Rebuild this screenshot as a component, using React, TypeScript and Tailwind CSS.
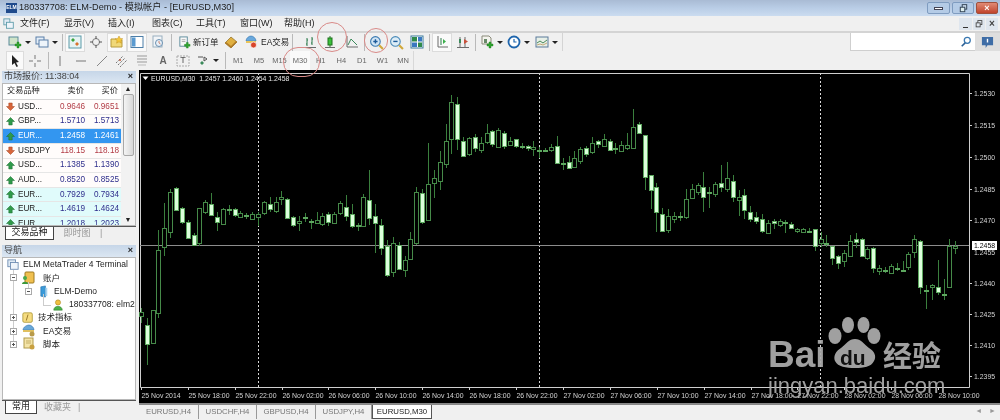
import type { ReactNode } from 'react';

const FONT = '[font-family:"Liberation_Sans","Noto_Sans_CJK_SC",sans-serif]';

// high, body top, body bottom, low, filled (pixel rows of the chart)
const CANDLES: number[][] = [
  [308, 312, 316, 323, 0], [318, 325, 344, 365, 1], [310, 310, 343, 344, 0], [230, 250, 313, 318, 0],
  [203, 228, 247, 256, 0], [189, 192, 232, 238, 0], [187, 188, 210, 210, 1], [207, 208, 222, 224, 1],
  [220, 222, 238, 239, 1], [233, 235, 245, 246, 1], [208, 208, 243, 246, 0], [200, 202, 212, 214, 0],
  [193, 204, 215, 216, 1], [212, 217, 222, 231, 1], [208, 209, 224, 225, 0], [205, 209, 210, 215, 1],
  [208, 209, 215, 217, 1], [211, 213, 217, 218, 0], [213, 215, 216, 219, 1], [212, 214, 219, 220, 0],
  [212, 214, 217, 226, 0], [201, 202, 213, 215, 0], [197, 204, 209, 212, 1], [197, 202, 211, 213, 0],
  [191, 197, 199, 205, 0], [198, 199, 218, 219, 1], [216, 217, 225, 227, 1], [216, 221, 223, 231, 0],
  [213, 217, 218, 222, 1], [219, 221, 222, 229, 1], [212, 220, 223, 224, 0], [213, 216, 224, 226, 0],
  [212, 214, 222, 226, 1], [212, 214, 223, 224, 0], [201, 203, 213, 215, 0], [195, 207, 216, 221, 1],
  [204, 214, 226, 228, 1], [223, 225, 226, 231, 1], [194, 197, 226, 227, 0], [170, 200, 218, 225, 1],
  [204, 216, 223, 253, 1], [219, 225, 248, 255, 1], [240, 246, 275, 277, 1], [237, 243, 272, 277, 0],
  [242, 245, 269, 270, 1], [256, 260, 270, 277, 0], [232, 239, 259, 260, 0], [187, 192, 243, 245, 0],
  [189, 193, 222, 224, 1], [143, 184, 220, 220, 0], [170, 178, 183, 198, 0], [151, 162, 181, 190, 0],
  [124, 141, 164, 168, 0], [95, 102, 139, 154, 0], [97, 104, 139, 150, 1], [137, 141, 156, 156, 1],
  [137, 138, 154, 156, 0], [134, 137, 148, 152, 1], [137, 143, 150, 153, 0], [124, 133, 142, 144, 0],
  [130, 131, 144, 147, 1], [128, 130, 147, 148, 0], [131, 133, 146, 149, 1], [137, 141, 145, 146, 0],
  [139, 139, 146, 148, 1], [143, 146, 147, 149, 1], [145, 146, 148, 151, 1], [141, 147, 149, 156, 0],
  [147, 150, 151, 158, 1], [148, 150, 151, 152, 1], [144, 147, 150, 152, 0], [136, 146, 163, 164, 1],
  [158, 163, 164, 170, 1], [156, 162, 168, 168, 1], [151, 158, 167, 168, 0], [147, 149, 161, 164, 0],
  [146, 148, 154, 157, 1], [137, 143, 152, 154, 0], [140, 141, 144, 148, 1], [134, 139, 146, 147, 0],
  [139, 141, 150, 151, 1], [143, 148, 149, 154, 1], [141, 145, 151, 152, 0], [133, 145, 148, 150, 0],
  [109, 127, 148, 148, 0], [122, 124, 133, 134, 1], [135, 135, 177, 190, 1], [175, 175, 190, 209, 1],
  [183, 187, 212, 232, 1], [208, 214, 231, 232, 1], [209, 216, 230, 233, 0], [212, 216, 219, 223, 0],
  [212, 216, 217, 221, 1], [189, 199, 217, 219, 0], [184, 189, 198, 199, 0], [183, 185, 192, 195, 0],
  [172, 187, 197, 212, 1], [187, 192, 193, 208, 1], [182, 184, 194, 197, 0], [165, 183, 187, 192, 1],
  [162, 178, 189, 192, 0], [175, 181, 197, 202, 1], [190, 197, 200, 216, 0], [189, 195, 210, 219, 1],
  [206, 212, 219, 222, 1], [212, 217, 221, 224, 1], [214, 219, 231, 233, 1], [220, 223, 233, 234, 0],
  [219, 221, 223, 229, 1], [219, 221, 225, 227, 0], [220, 222, 223, 233, 1], [222, 224, 228, 229, 1],
  [228, 229, 231, 233, 0], [228, 229, 232, 233, 0], [228, 231, 232, 232, 1], [229, 229, 246, 251, 1],
  [232, 239, 243, 247, 0], [235, 243, 244, 247, 1], [246, 246, 258, 265, 1], [255, 256, 263, 269, 1],
  [250, 253, 261, 267, 0], [235, 241, 256, 257, 0], [233, 239, 242, 248, 1], [238, 239, 256, 257, 1],
  [247, 249, 258, 260, 0], [247, 248, 268, 273, 1], [265, 268, 271, 275, 0], [267, 270, 271, 273, 1],
  [264, 266, 273, 274, 0], [263, 268, 269, 271, 1], [261, 270, 271, 272, 1], [252, 254, 267, 270, 0],
  [235, 239, 252, 258, 0], [240, 241, 287, 294, 1], [285, 290, 291, 309, 1], [284, 285, 287, 300, 0],
  [260, 287, 292, 295, 1], [279, 294, 295, 300, 1], [239, 246, 287, 288, 0], [241, 246, 248, 254, 0],
];

const PRICES: [string, number][] = [
  ['1.2530', 93], ['1.2515', 125], ['1.2500', 157], ['1.2485', 189], ['1.2470', 220],
  ['1.2440', 283], ['1.2425', 314], ['1.2410', 345], ['1.2395', 376],
];

const TIMES = [
  '25 Nov 2014', '25 Nov 18:00', '25 Nov 22:00', '26 Nov 02:00', '26 Nov 06:00', '26 Nov 10:00',
  '26 Nov 14:00', '26 Nov 18:00', '26 Nov 22:00', '27 Nov 02:00', '27 Nov 06:00', '27 Nov 10:00',
  '27 Nov 14:00', '27 Nov 18:00', '27 Nov 22:00', '28 Nov 02:00', '28 Nov 06:00', '28 Nov 10:00',
];

const QUOTES = [
  { s: 'USD...', bid: '0.9646', ask: '0.9651', up: false, tone: 'red' },
  { s: 'GBP...', bid: '1.5710', ask: '1.5713', up: true, tone: 'blue' },
  { s: 'EUR...', bid: '1.2458', ask: '1.2461', up: true, tone: 'sel' },
  { s: 'USDJPY', bid: '118.15', ask: '118.18', up: false, tone: 'red' },
  { s: 'USD...', bid: '1.1385', ask: '1.1390', up: true, tone: 'blue' },
  { s: 'AUD...', bid: '0.8520', ask: '0.8525', up: true, tone: 'blue' },
  { s: 'EUR...', bid: '0.7929', ask: '0.7934', up: true, tone: 'cross' },
  { s: 'EUR...', bid: '1.4619', ask: '1.4624', up: true, tone: 'cross' },
  { s: 'EUR...', bid: '1.2018', ask: '1.2023', up: true, tone: 'cross' },
];

function Ico({ children, size = 14 }: { children: ReactNode; size?: number }) {
  return (
    <svg width={size} height={size} viewBox="0 0 14 14" fill="none" className="shrink-0">
      {children}
    </svg>
  );
}

function Caret() {
  return <span className="ml-[3px] h-0 w-0 border-x-[3px] border-t-[3px] border-x-transparent border-t-[#222]" />;
}

function Sep() {
  return <div className="mx-[2px] h-[17px] w-px shrink-0 bg-[#b9b9b9]" />;
}

function Btn({ w, on, children }: { w: string; on?: boolean; children: ReactNode }) {
  return (
    <div className={`flex h-[19px] shrink-0 items-center justify-center ${w} ${on ? 'bg-[#fafafa] outline outline-1 -outline-offset-1 outline-[#dcdcdc]' : ''}`}>
      {children}
    </div>
  );
}

function Plus() {
  return <path d="M9 7h2v2h2v2h-2v2H9v-2H7V9h2z" fill="#2fa32f" stroke="#1c7a1c" strokeWidth=".4" />;
}

function TimeFrame({ label, on }: { label: string; on?: boolean }) {
  return (
    <div className={`flex h-[19px] w-[20.6px] shrink-0 items-center justify-center text-[7.5px] text-[#666] ${on ? 'bg-[#fafafa]' : ''}`}>
      {label}
    </div>
  );
}

function MainToolbar() {
  return (
    <div className="flex h-[20px] items-center justify-between border-t-2 border-[#d4d4d4]">
      <div className="flex h-full w-[563px] items-center border-r border-[#d4d4d4] pl-[6px]">
        <Btn w="w-[26px]">
          <Ico><rect x="1" y="2" width="9" height="8" fill="#cfe4c8" stroke="#5a8a9a" /><Plus /></Ico><Caret />
        </Btn>
        <Btn w="w-[28px]">
          <Ico><rect x="1" y="2" width="8" height="7" fill="#e4eef8" stroke="#5a7fa8" /><rect x="4" y="5" width="9" height="7" fill="#eef4fa" stroke="#5a7fa8" /></Ico><Caret />
        </Btn>
        <Sep />
        <Btn w="w-[20px]" on>
          <Ico><rect x="1" y="1" width="12" height="12" fill="#e6f3f3" stroke="#5a9aa8" /><path d="M5 3l2 2-2 2-2-2z" fill="#3da33d" /><path d="M9 7l2 2-2 2-2-2z" fill="#d8732c" /></Ico>
        </Btn>
        <Btn w="w-[22px]">
          <Ico><circle cx="7" cy="7" r="3.5" stroke="#7c7c7c" /><path d="M7 1v3M7 10v3M1 7h3M10 7h3" stroke="#555" /></Ico>
        </Btn>
        <Btn w="w-[20px]" on>
          <Ico><path d="M1 4h5l1 1h5v7H1z" fill="#f0d878" stroke="#b89a3a" /><path d="M9 1l1.2 2.4 2.6.4-1.9 1.8.5 2.6L9 6.8l-2.4 1.4.5-2.6-1.900-1.800 2.600-.4z" fill="#f5c83a" stroke="#c09020" strokeWidth=".5" /></Ico>
        </Btn>
        <Btn w="w-[20px]" on>
          <Ico><rect x="1" y="1.5" width="12" height="11" fill="#fff" stroke="#4c7ea8" /><rect x="2" y="2.5" width="3.5" height="9" fill="#5a9ad0" /></Ico>
        </Btn>
        <Btn w="w-[22px]">
          <Ico><rect x="2" y="1" width="9" height="11" fill="#f2f5f8" stroke="#9ab0c0" /><circle cx="8" cy="8" r="3.5" fill="#e8f0f8" stroke="#6a90b0" /><path d="M8 6v2l1.5 1" stroke="#c05a3a" strokeWidth=".7" /></Ico>
        </Btn>
        <Sep />
        <div className="ml-[4px] flex w-[44px] shrink-0 items-center gap-[1px] text-[8.5px] text-[#222]">
          <Ico size={13}><rect x="2" y="1" width="8" height="10" fill="#f8f8f8" stroke="#5a8a9a" /><path d="M4 4h4M4 6h4" stroke="#888" strokeWidth=".7" /><Plus /></Ico>
          <span className="ml-[1px]">新订单</span>
        </div>
        <Btn w="w-[18px]">
          <Ico><path d="M1 8l6-6 6 5-6 6z" fill="#e0b040" stroke="#8a6a20" strokeWidth=".7" /><path d="M1 8l6 5 6-6-1-1-5 5-5-4z" fill="#b07a28" /></Ico>
        </Btn>
        <div className="ml-[4px] flex w-[46px] shrink-0 items-center gap-[3px] text-[8.5px] text-[#222]">
          <Ico><path d="M2 6c0-3 3-5 5-5s5 2 5 5z" fill="#6aa8dc" stroke="#3a78b0" strokeWidth=".6" /><path d="M2 6h10v2H2z" fill="#e9c45a" /><circle cx="9.5" cy="10" r="3" fill="#d8452a" stroke="#fff" strokeWidth=".7" /></Ico>
          EA交易
        </div>
        <Sep />
        <div className="w-[5px] shrink-0" />
        <Btn w="w-[20px]">
          <Ico><path d="M4 3v8M3 9h1M4 5h1M9 2v8M8 8h1M9 4h1" stroke="#2a7a4a" /><path d="M1 12.5h12" stroke="#6a6a6a" /></Ico>
        </Btn>
        <Btn w="w-[20px]">
          <Ico><path d="M7 1v11" stroke="#2a7a2a" /><rect x="5" y="3" width="4" height="7" fill="#3ac03a" stroke="#1c701c" /><path d="M2 12.5h10" stroke="#6a6a6a" /></Ico>
        </Btn>
        <div className="w-[2px] shrink-0" />
        <Btn w="w-[20px]">
          <Ico><path d="M2 1v11h11" stroke="#6a6a6a" /><path d="M3 10l3-6 3 3 3 3" stroke="#3a8a5a" /></Ico>
        </Btn>
        <Sep />
        <Btn w="w-[19px]">
          <Ico size={15}><circle cx="6" cy="6" r="4.5" fill="#cfe4f4" stroke="#3a7ab0" /><path d="M4 6h4M6 4v4" stroke="#1c5a9a" strokeWidth="1.3" /><path d="M9.5 9.5l3.5 3.5" stroke="#d0a83a" strokeWidth="2" /></Ico>
        </Btn>
        <Btn w="w-[20px]">
          <Ico size={15}><circle cx="6" cy="6" r="4.5" fill="#dcecf6" stroke="#4a8ab8" /><path d="M4 6h4" stroke="#1c5a9a" strokeWidth="1.3" /><path d="M9.5 9.5l3.5 3.5" stroke="#d0a83a" strokeWidth="2" /></Ico>
        </Btn>
        <Btn w="w-[21px]">
          <Ico><rect x="1" y="1" width="12" height="12" fill="#fff" stroke="#3a7a9a" /><rect x="2" y="2" width="5" height="4.5" fill="#2f8a4a" /><rect x="8" y="2" width="4" height="4.5" fill="#3a78c0" /><rect x="2" y="7.5" width="5" height="4.5" fill="#3a78c0" /><rect x="8" y="7.5" width="4" height="4.5" fill="#2f8a4a" /></Ico>
        </Btn>
        <Sep />
        <Btn w="w-[20px]" on>
          <Ico><path d="M3 1v11h10" stroke="#6a6a6a" /><path d="M6 3v7" stroke="#2a7a4a" /><path d="M8 4l3 2.5L8 9z" fill="#3ab04a" /></Ico>
        </Btn>
        <Btn w="w-[21px]">
          <Ico><path d="M1 12.5h12M4 2v10M9 2v10" stroke="#6a6a6a" /><rect x="3" y="4" width="2" height="4" fill="#3a8a5a" /><path d="M8 4l4 2.5L8 9z" fill="#c8503a" /></Ico>
        </Btn>
        <Sep />
        <Btn w="w-[26px]">
          <Ico><path d="M2 1h7l2 2v6H2z" fill="#f4f4ee" stroke="#8a8a7a" /><rect x="4" y="4" width="3" height="4" fill="#6a8a6a" /><Plus /></Ico><Caret />
        </Btn>
        <Btn w="w-[28px]">
          <Ico><circle cx="7" cy="7" r="5.5" fill="#fff" stroke="#1f66ad" strokeWidth="1.8" /><path d="M7 4v3h2.5" stroke="#1f66ad" strokeWidth="1.2" /></Ico><Caret />
        </Btn>
        <Btn w="w-[28px]">
          <Ico><rect x="1" y="2" width="12" height="10" fill="#e8f0e8" stroke="#5a7a9a" /><path d="M2 8l3-2 3 2 4-3" stroke="#4a8a5a" /><path d="M2 10l3-1 3 1 4-2" stroke="#b08a4a" strokeWidth=".7" /></Ico><Caret />
        </Btn>
      </div>
      <div className="flex-1" />
      <div className="flex h-[18px] w-[125px] items-center justify-end border-b border-l border-[#cfcfcf] bg-white pr-[3px]">
        <Ico size={12}><circle cx="8.5" cy="5" r="3.5" stroke="#3a78b0" strokeWidth="1.5" /><path d="M6 8l-4 4" stroke="#2a5f95" strokeWidth="1.8" /></Ico>
      </div>
      <div className="flex h-[18px] w-[25px] items-center justify-center bg-[#dedede]">
        <Ico size={13}><path d="M1 1h12v9H7l-2 3v-3H1z" fill="#3f6da6" /><path d="M7 3v4" stroke="#fff" strokeWidth="1.5" /></Ico>
      </div>
    </div>
  );
}

function DrawToolbar() {
  return (
    <div className="flex h-[19px] items-center">
      <div className="flex h-full w-[414px] items-center border-r border-[#d8d8d8] pl-[6px]">
        <Btn w="w-[18px]" on>
          <Ico><path d="M4 1v10l2.5-2 2 4 1.5-.8-2-3.8 3-.4z" fill="#222" /></Ico>
        </Btn>
        <Btn w="w-[22px]">
          <Ico><path d="M7 1v4M7 9v4M1 7h4M9 7h4" stroke="#777" /></Ico>
        </Btn>
        <Sep />
        <Btn w="w-[18px]"><Ico><path d="M7 2v10" stroke="#777" /></Ico></Btn>
        <Btn w="w-[23px]"><Ico><path d="M2 7h10" stroke="#777" /></Ico></Btn>
        <Btn w="w-[20px]"><Ico><path d="M2 12l10-10" stroke="#888" /></Ico></Btn>
        <Btn w="w-[20px]">
          <Ico><path d="M1 9l7-7M3 11l7-7M5 13l7-7" stroke="#777" strokeDasharray="1.5 .8" /><circle cx="5" cy="6" r="1" fill="#c05a3a" /></Ico>
        </Btn>
        <Btn w="w-[20px]"><Ico><path d="M2 2h10M2 5h10M2 8h10" stroke="#999" /><path d="M3 11h8" stroke="#bbb" /></Ico></Btn>
        <Btn w="w-[22px]"><span className="text-[10px] font-bold text-[#666]">A</span></Btn>
        <Btn w="w-[18px]">
          <Ico><path d="M1 2h12v10H1z" stroke="#aaa" strokeDasharray="2 1" /></Ico>
          <span className="absolute text-[9px] text-[#555]">T</span>
        </Btn>
        <Btn w="w-[31px]">
          <Ico><path d="M2 3h5M8 3l3 2-3 2z" stroke="#555" /><path d="M4 9l2 2 2-2-2-2z" fill="#3a8a5a" /></Ico><Caret />
        </Btn>
        <Sep />
        {['M1', 'M5', 'M15', 'M30', 'H1', 'H4', 'D1', 'W1', 'MN'].map((t) => (
          <TimeFrame key={t} label={t} on={t === 'M30'} />
        ))}
      </div>
    </div>
  );
}

function Arrow({ up }: { up: boolean }) {
  return (
    <svg width="9" height="9" viewBox="0 0 9 9" className="shrink-0">
      {up ? (
        <path d="M4.5.5l4 4H6.2V8H2.800V4.500H.5z" fill="#2f9a4a" stroke="#1c6a30" strokeWidth=".5" />
      ) : (
        <path d="M4.5 8.5l4-4H6.2V1H2.800V4.500H.5z" fill="#d8653a" stroke="#a0401f" strokeWidth=".5" />
      )}
    </svg>
  );
}

function QuoteRow({ q }: { q: (typeof QUOTES)[number] }) {
  const rowBg = q.tone === 'sel' ? 'bg-[#3396f0]' : q.tone === 'cross' ? 'bg-[#e0fbfb]' : 'bg-[#fffcfb]';
  const num = q.tone === 'sel' ? 'text-white' : q.tone === 'red' ? 'text-[#b23c46]' : 'text-[#2e2e8c]';
  const sym = q.tone === 'sel' ? 'text-white' : 'text-[#222]';
  return (
    <div className={`flex h-[14.65px] shrink-0 items-center border-b border-[#e6e6e6] text-[8.2px] ${rowBg}`}>
      <div className={`flex w-[51px] items-center gap-[3px] pl-[3px] ${sym}`}>
        <Arrow up={q.up} />
        {q.s}
      </div>
      <div className={`w-[33px] pr-[2px] text-right ${num}`}>{q.bid}</div>
      <div className={`w-[34px] pr-[2px] text-right ${num}`}>{q.ask}</div>
    </div>
  );
}

function PanelHeader({ title }: { title: string }) {
  return (
    <div className="flex h-[12px] shrink-0 items-center justify-between bg-gradient-to-b from-[#c6d6e8] to-[#dbe6f2] pl-[2px] pr-[3px] text-[9px] text-[#444]">
      <span>{title}</span>
      <span className="text-[9px] font-bold text-[#222]">×</span>
    </div>
  );
}

function PanelTab({ label, on, w }: { label: string; on?: boolean; w: string }) {
  return (
    <div className={`flex h-[13px] items-center justify-center text-[9px] ${w} ${on ? 'border-x border-b border-[#444] bg-white text-[#222]' : 'text-[#999]'}`}>
      {label}
    </div>
  );
}

function MarketWatch() {
  return (
    <div className="flex h-[175px] shrink-0 flex-col">
      <div className="h-[1px]" />
      <PanelHeader title="市场报价: 11:38:04" />
      <div className="flex h-[143px] border border-[#b8b8b8] bg-white">
        <div className="flex w-[119px] flex-col overflow-hidden">
          <div className="flex h-[16px] shrink-0 items-center border-b border-[#d8d8d8] text-[8.2px] text-[#222]">
            <div className="w-[51px] pl-[4px]">交易品种</div>
            <div className="w-[33px] pr-[3px] text-right">卖价</div>
            <div className="w-[34px] pr-[3px] text-right">买价</div>
          </div>
          {QUOTES.map((q, i) => (
            <QuoteRow key={i} q={q} />
          ))}
        </div>
        <div className="flex w-[14px] flex-col items-center bg-[#f2f2f2] text-[7px] text-[#222]">
          <span className="h-[10px] leading-[10px]">▲</span>
          <div className="h-[62px] w-[11px] rounded-[2px] border border-[#a8a8a8] bg-gradient-to-r from-[#f4f4f4] to-[#d8d8d8]" />
          <span className="mt-auto h-[10px] leading-[10px]">▼</span>
        </div>
      </div>
      <div className="flex h-[15px] items-start border-t border-[#555] pl-[3px]">
        <PanelTab label="交易品种" on w="w-[49px]" />
        <PanelTab label="即时图" w="w-[46px]" />
        <span className="text-[9px] leading-[13px] text-[#999]">|</span>
      </div>
    </div>
  );
}

function Box({ plus }: { plus?: boolean }) {
  return (
    <span className="relative z-10 flex h-[7px] w-[7px] shrink-0 items-center justify-center border border-[#aaa] bg-white">
      <span className="h-px w-[3px] bg-[#555]" />
      {plus && <span className="absolute h-[3px] w-px bg-[#555]" />}
    </span>
  );
}

function NavRow({ pad, children }: { pad: string; children: ReactNode }) {
  return <div className={`flex h-[13.3px] items-center whitespace-nowrap ${pad}`}>{children}</div>;
}

function Navigator() {
  return (
    <div className="flex h-[170px] shrink-0 flex-col">
      <PanelHeader title="导航" />
      <div className="relative flex-1 overflow-hidden border border-[#b8b8b8] bg-white text-[8.5px] text-[#222]">
        {/* tree connector lines */}
        <div className="absolute left-[10px] top-[12px] h-[73px] w-px bg-[#ccc]" />
        <div className="absolute left-[25px] top-[24px] h-[8px] w-px bg-[#ccc]" />
        <div className="absolute left-[40px] top-[36px] h-[12px] w-px bg-[#ccc]" />
        <div className="absolute left-[40px] top-[47px] h-px w-[8px] bg-[#ccc]" />
        <NavRow pad="pl-[4px]">
          <Ico size={12}><rect x="1" y="1" width="9" height="8" fill="#dfeaf4" stroke="#6a8ab0" /><rect x="4" y="4" width="9" height="8" fill="#eef4fa" stroke="#6a8ab0" /></Ico>
          <span className="ml-[4px]">ELM MetaTrader 4 Terminal</span>
        </NavRow>
        <NavRow pad="pl-[7px]">
          <Box />
          <span className="ml-[4px] flex"><Ico><rect x="4" y="1" width="9" height="11" rx="1" fill="#f0c050" stroke="#a07a20" /><circle cx="4" cy="7" r="2" fill="#4aa84a" /><path d="M1 13c0-3 6-3 6 0z" fill="#3a983a" /></Ico></span>
          <span className="ml-[8px]">账户</span>
        </NavRow>
        <NavRow pad="pl-[22px]">
          <Box />
          <span className="ml-[6px] flex"><Ico size={13}><path d="M3 2l5-1v12l-5-1z" fill="#3a9ad8" stroke="#1f6aa8" strokeWidth=".6" /><path d="M8 3h2v9H8z" fill="#a8d4f0" /></Ico></span>
          <span className="ml-[3px]">ELM-Demo</span>
        </NavRow>
        <NavRow pad="pl-[49px]">
          <Ico size={12}><circle cx="7" cy="4" r="3" fill="#f0c040" stroke="#a08020" strokeWidth=".6" /><path d="M2 13c0-6 10-6 10 0z" fill="#4ab04a" stroke="#2a7a2a" strokeWidth=".6" /></Ico>
          <span className="ml-[5px]">180337708: elm20</span>
        </NavRow>
        <NavRow pad="pl-[7px]">
          <Box plus />
          <span className="ml-[5px] flex"><Ico size={12}><rect x="1" y="1" width="11" height="11" rx="1.5" fill="#f6dc80" stroke="#b09a3a" /><path d="M5 10l2-7" stroke="#8a6a20" /></Ico></span>
          <span className="ml-[4px]">技术指标</span>
        </NavRow>
        <NavRow pad="pl-[7px]">
          <Box plus />
          <span className="ml-[5px] flex"><Ico><path d="M1 6c0-3 4-5 6-5s5 2 5 5z" fill="#6aa8d8" stroke="#3a78b0" strokeWidth=".6" /><path d="M1 6h11v2H1z" fill="#e0c060" /><circle cx="10" cy="10" r="2.5" fill="#b89a4a" /></Ico></span>
          <span className="ml-[7px]">EA交易</span>
        </NavRow>
        <NavRow pad="pl-[7px]">
          <Box plus />
          <span className="ml-[5px] flex"><Ico><rect x="2" y="1" width="9" height="10" fill="#f4e4a8" stroke="#b09a4a" /><path d="M4 4h5M4 6h5" stroke="#b09a4a" strokeWidth=".7" /><circle cx="10" cy="10" r="2.5" fill="#c8a040" /></Ico></span>
          <span className="ml-[7px]">脚本</span>
        </NavRow>
      </div>
      <div className="flex h-[15px] shrink-0 items-start border-t border-[#555] pl-[3px]">
        <PanelTab label="常用" on w="w-[32px]" />
        <PanelTab label="收藏夹" w="w-[41px]" />
        <span className="text-[9px] leading-[13px] text-[#999]">|</span>
      </div>
    </div>
  );
}

function Chart() {
  return (
    <svg viewBox="139 70 861 333" width="861" height="333" className="block shrink-0 bg-black">
      <path d="M140.5 73.5H969.5V387.500H140.5z" fill="none" stroke="#cfcfcf" />
      <path d="M258.5 73V387M539.5 73V387M820.5 73V387" stroke="#d8d8d8" strokeDasharray="2 2" />
      <path d="M140 245.5H969" stroke="#8c8c8c" />

      {CANDLES.map(([hi, top, bot, lo, filled], i) => {
        const x = Math.round(140.8 + 5.86 * i) + 0.5;
        return (
          <g key={i}>
            <path d={`M${x} ${hi}V${lo}`} stroke="#3a7f3d" />
            <rect
              x={x - 2}
              y={top + 0.5}
              width="4"
              height={Math.max(bot - top, 1)}
              fill={filled ? '#dcffdc' : '#000'}
              stroke={filled ? '#5da85f' : '#468a49'}
            />
          </g>
        );
      })}

      <path d="M142.5 76.5h6l-3 3.500z" fill="#fff" />
      <text x="151" y="81" fill="#e8e8e8" fontSize="6.9" xmlSpace="preserve">EURUSD,M30  1.2457 1.2460 1.2454 1.2458</text>

      {PRICES.map(([label, y]) => (
        <g key={label}>
          <path d={`M970 ${y + 0.5}h2`} stroke="#cfcfcf" />
          <text x="974" y={y + 3} fill="#d4d4d4" fontSize="6.9">{label}</text>
        </g>
      ))}
      <text x="974" y="255" fill="#d4d4d4" fontSize="6.9">1.2455</text>
      <rect x="972" y="241" width="25" height="9" fill="#fff" />
      <text x="974" y="248" fill="#000" fontSize="6.9">1.2458</text>

      {TIMES.map((label, i) => {
        const x = Math.round(140.8 + 46.9 * i);
        return (
          <g key={label}>
            <path d={`M${x + 0.5} 387v3`} stroke="#cfcfcf" />
            <text x={x + 0.5} y="398" fill="#d4d4d4" fontSize="6.9">{label}</text>
          </g>
        );
      })}

      {/* baidu jingyan watermark */}
      <g fill="#aeaeae" opacity="0.92">
        <ellipse cx="848" cy="325" rx="6" ry="8" />
        <ellipse cx="863.5" cy="325" rx="6" ry="8" />
        <ellipse cx="835" cy="336" rx="6.5" ry="8" />
        <ellipse cx="874" cy="336" rx="6.5" ry="8" />
        <path d="M855 339c6 0 9 5 14 9 5 3 8 8 5 13-3 6-10 7-19 7s-17-1-20-7c-2-5 1-10 6-13 5-4 8-9 14-9z" />
        <text x="768" y="367" fontSize="37" fontWeight="700">Bai</text>
        <text x="883" y="367" fontSize="29" fontWeight="700">经验</text>
        <text x="768" y="393" fontSize="22">jingyan.baidu.com</text>
      </g>
      <text x="840" y="365" fontSize="21" fontWeight="700" fill="#111">du</text>
    </svg>
  );
}

function ChartTab({ label, on, w }: { label: string; on?: boolean; w: string }) {
  return (
    <div className={`flex h-[14px] shrink-0 items-center justify-center text-[7.8px] ${w} ${on ? 'border-x border-b border-[#555] bg-white text-[#222]' : 'border-r border-[#999] text-[#777]'}`}>
      {label}
    </div>
  );
}

export default function App() {
  return (
    <div className={`relative flex h-[420px] w-[1000px] flex-col overflow-hidden bg-[#f0f0f0] blur-[0.35px] ${FONT}`}>
      {/* title bar */}
      <div className="flex h-[16px] shrink-0 items-center bg-gradient-to-b from-[#a9bbd4] via-[#b9cde6] to-[#cbdcf0] pl-[6px]">
        <div className="flex h-[10px] w-[11px] items-center justify-center bg-[#1f4a8c] text-[5px] font-bold text-white">ELM</div>
        <span className="ml-[2px] text-[9.2px] text-[#222]">180337708: ELM-Demo - 模拟帐户 - [EURUSD,M30]</span>
        <div className="ml-auto mr-[2px] flex items-center gap-[2px]">
          <div className="flex h-[12px] w-[23px] items-center justify-center rounded-[2px] border border-[#7f9cc0] bg-[#b4cbe6]">
            <span className="h-[3px] w-[9px] border border-[#445] bg-white" />
          </div>
          <div className="flex h-[12px] w-[22px] items-center justify-center rounded-[2px] border border-[#7f9cc0] bg-[#b4cbe6]">
            <Ico size={9}><rect x="5" y="1" width="7" height="7" fill="#cde" stroke="#345" strokeWidth="1.5" /><rect x="2" y="5" width="7" height="7" fill="#dee" stroke="#345" strokeWidth="1.5" /></Ico>
          </div>
          <div className="flex h-[12px] w-[22px] items-center justify-center rounded-[2px] border border-[#a0503c] bg-gradient-to-b from-[#e08a74] to-[#c0432c] text-[9px] font-bold leading-none text-white">×</div>
        </div>
      </div>

      {/* menu bar */}
      <div className="flex h-[15px] shrink-0 items-center pl-[3px] text-[9px] text-[#222]">
        <div className="w-[17px]">
          <Ico size={12}><rect x="1" y="1" width="7" height="7" fill="#dfeaf4" stroke="#5a9aa8" /><rect x="4" y="5" width="8" height="7" fill="#eef4fa" stroke="#5a9aa8" /></Ico>
        </div>
        {['文件(F)', '显示(V)', '插入(I)', '图表(C)', '工具(T)', '窗口(W)', '帮助(H)'].map((m) => (
          <span key={m} className="w-[44px] shrink-0">{m}</span>
        ))}
        <div className="ml-auto mr-[2px] flex items-center text-[#444]">
          <span className="flex h-[12px] w-[13px] items-end justify-center bg-[#dfe6ee] pb-[2px]"><span className="h-px w-[5px] bg-[#333]" /></span>
          <span className="ml-[1px] flex h-[12px] w-[12px] items-center justify-center bg-[#dfe6ee]"><Ico size={8}><rect x="5" y="1" width="7" height="7" stroke="#444" strokeWidth="1.5" /><rect x="2" y="5" width="7" height="7" fill="#dfe6ee" stroke="#444" strokeWidth="1.5" /></Ico></span>
          <span className="ml-[1px] flex h-[12px] w-[12px] items-center justify-center bg-[#dfe6ee] text-[10px] font-bold leading-none">×</span>
        </div>
      </div>

      <MainToolbar />
      <DrawToolbar />

      {/* main area */}
      <div className="flex min-h-0 flex-1">
        <div className="flex w-[136px] shrink-0 flex-col pl-[2px]">
          <MarketWatch />
          <Navigator />
        </div>
        <div className="ml-[3px] flex w-[861px] shrink-0 flex-col">
          <Chart />
          <div className="flex flex-1 items-start border-t-2 border-[#888]">
            <ChartTab label="EURUSD,H4" w="w-[60px]" />
            <ChartTab label="USDCHF,H4" w="w-[58px]" />
            <ChartTab label="GBPUSD,H4" w="w-[59px]" />
            <ChartTab label="USDJPY,H4" w="w-[56px]" />
            <ChartTab label="EURUSD,M30" on w="w-[60px]" />
            <div className="ml-auto mr-[4px] flex h-[13px] items-center gap-[7px] text-[7px] text-[#999]">
              <span>◄</span>
              <span>►</span>
            </div>
          </div>
        </div>
      </div>

      {/* red marks drawn on the screenshot */}
      <div className="absolute left-[317px] top-[22px] h-[30px] w-[30px] rounded-full border border-[#d98a88]" />
      <div className="absolute left-[283px] top-[47px] h-[30px] w-[37px] rounded-full border border-[#d98a88]" />
      <div className="absolute left-[364px] top-[28px] h-[25px] w-[24px] rounded-full border border-[#d98a88]" />
    </div>
  );
}
